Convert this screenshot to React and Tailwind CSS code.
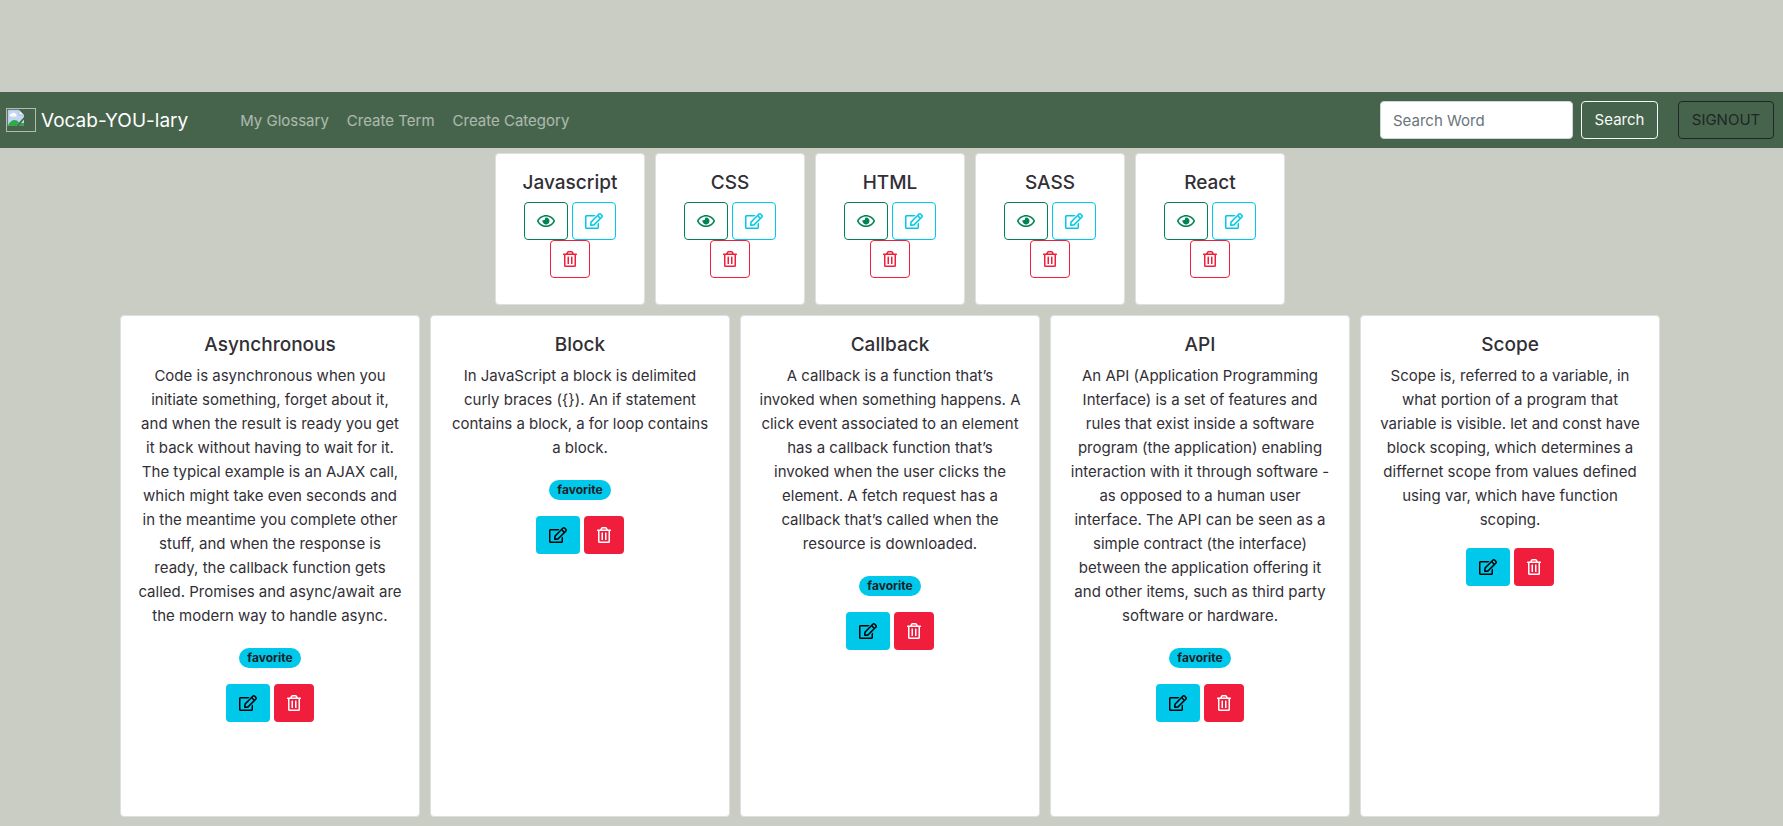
import { FaRegEdit, FaRegEye, FaRegTrashAlt } from 'react-icons/fa';

const categories = ['Javascript', 'CSS', 'HTML', 'SASS', 'React'];

const terms = [
  {
    title: 'Asynchronous',
    favorite: true,
    text: 'Code is asynchronous when you initiate something, forget about it, and when the result is ready you get it back without having to wait for it. The typical example is an AJAX call, which might take even seconds and in the meantime you complete other stuff, and when the response is ready, the callback function gets called. Promises and async/await are the modern way to handle async.',
  },
  {
    title: 'Block',
    favorite: true,
    text: 'In JavaScript a block is delimited curly braces ({}). An if statement contains a block, a for loop contains a block.',
  },
  {
    title: 'Callback',
    favorite: true,
    text: 'A callback is a function that’s invoked when something happens. A click event associated to an element has a callback function that’s invoked when the user clicks the element. A fetch request has a callback that’s called when the resource is downloaded.',
  },
  {
    title: 'API',
    favorite: true,
    text: 'An API (Application Programming Interface) is a set of features and rules that exist inside a software program (the application) enabling interaction with it through software - as opposed to a human user interface. The API can be seen as a simple contract (the interface) between the application offering it and other items, such as third party software or hardware.',
  },
  {
    title: 'Scope',
    favorite: false,
    text: 'Scope is, referred to a variable, in what portion of a program that variable is visible. let and const have block scoping, which determines a differnet scope from values defined using var, which have function scoping.',
  },
];

function MissingImage() {
  return (
    <svg className="h-6 w-[30px]" viewBox="0 0 30 24" role="img" aria-label="Logo">
      <rect x="0.5" y="0.5" width="29" height="23" fill="none" stroke="#b4b9b2" />
      <path d="M2 2h11l5 5v2l-8 9H2z" fill="#c3d7f5" />
      <path d="M13 2l5 5h-5z" fill="#f3f6fb" stroke="#8f9bb0" strokeWidth="0.6" />
      <path d="M4 8.2a1.8 1.8 0 0 1 1.6-2.4 2.4 2.4 0 0 1 4.3.6 1.5 1.5 0 0 1 .3 2.2H4.6z" fill="#fff" />
      <path d="M2 17c1.500-3 4-5 6.500-5 1.800 0 3 .8 4.500 2.600L10 18H2z" fill="#2fab45" />
      <path d="M18 11.5V15h-3z" fill="#c3d7f5" />
      <path d="M15 15h3v3h-5.500z" fill="#2fab45" />
      <path d="M2 18V2h11" fill="none" stroke="#a9b7cc" strokeWidth="0.6" />
    </svg>
  );
}

function CategoryCard({ title }) {
  return (
    <article className="h-[152px] w-[150px] rounded border border-[#dfdfdf] bg-white p-4 text-center">
      <h2 className="mt-px mb-[7px] text-[19px] leading-6 font-medium">{title}</h2>
      <div className="flex flex-wrap justify-center gap-x-1">
        <button type="button" aria-label={`View ${title}`} className="flex h-[38px] w-11 items-center justify-center rounded border border-[#008352] text-[#008352]">
          <FaRegEye className="h-4 w-[18px]" />
        </button>
        <button type="button" aria-label={`Edit ${title}`} className="flex h-[38px] w-11 items-center justify-center rounded border border-[#00c8ea] text-[#00c8ea]">
          <FaRegEdit className="h-4 w-[18px]" />
        </button>
        <button type="button" aria-label={`Delete ${title}`} className="flex h-[38px] w-10 items-center justify-center rounded border border-[#f01e3c] text-[#f01e3c]">
          <FaRegTrashAlt className="h-4 w-[14px]" />
        </button>
      </div>
    </article>
  );
}

function TermCard({ title, text, favorite }) {
  return (
    <article className="min-h-[502px] w-[300px] rounded border border-[#dfdfdf] bg-white p-4 text-center">
      <h2 className="mt-px mb-[7px] text-[19px] leading-6 font-medium">{title}</h2>
      <p className="mb-4 px-px text-[15px] leading-6">{text}</p>
      {favorite && (
        <div className="mb-4 flex h-6 items-end justify-center">
          <span className="flex h-5 items-center rounded-full bg-[#00c8ea] px-2 text-xs leading-3 font-bold text-[#1c2126]">favorite</span>
        </div>
      )}
      <div className="flex justify-center gap-1">
        <button type="button" aria-label={`Edit ${title}`} className="flex h-[38px] w-11 items-center justify-center rounded bg-[#00c8ea] text-black">
          <FaRegEdit className="h-4 w-[18px]" />
        </button>
        <button type="button" aria-label={`Delete ${title}`} className="flex h-[38px] w-10 items-center justify-center rounded bg-[#f01e3c] text-white">
          <FaRegTrashAlt className="h-4 w-[14px]" />
        </button>
      </div>
    </article>
  );
}

export default function App() {
  return (
    <div className="min-h-screen bg-[#cacdc4] pt-[92px] pb-[9px] font-['Inter','Liberation_Sans',sans-serif] text-[#322f36]">
      <nav className="flex h-14 items-center bg-[#46644b] pr-[9px] pl-[6px]">
        <a href="#home" className="mr-[52px] flex items-center gap-[5px] text-[19px] leading-6 text-white">
          <MissingImage />
          <span className="pt-0.5">Vocab-YOU-lary</span>
        </a>
        <div className="flex gap-[18px] pt-0.5 text-[15px] leading-6 text-white/55">
          <a href="#glossary">My Glossary</a>
          <a href="#term">Create Term</a>
          <a href="#category">Create Category</a>
        </div>
        <form className="ml-auto flex gap-2" onSubmit={(event) => event.preventDefault()}>
          <input
            type="search"
            aria-label="Search Word"
            placeholder="Search Word"
            className="h-[38px] w-[193px] rounded border border-[#ced4da] bg-white px-3 text-[15px] placeholder:text-[#6a747d]"
          />
          <button type="submit" className="h-[38px] w-[77px] rounded border border-[#f8f9fa] text-[15px] text-[#f8f9fa]">Search</button>
        </form>
        <button type="button" className="ml-5 h-[38px] w-24 rounded border border-[#212529] text-[15px] text-[#212529]">SIGNOUT</button>
      </nav>
      <main className="flex flex-col gap-[10px] pt-[5px] pr-[3px]">
        <section className="flex flex-wrap justify-center gap-[10px]">
          {categories.map((title) => (
            <CategoryCard key={title} title={title} />
          ))}
        </section>
        <section className="flex flex-wrap justify-center gap-[10px]">
          {terms.map((term) => (
            <TermCard key={term.title} {...term} />
          ))}
        </section>
      </main>
    </div>
  );
}
